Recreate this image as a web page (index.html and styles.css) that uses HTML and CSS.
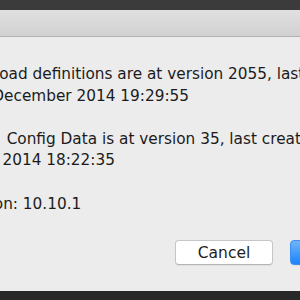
FILE: index.html
```html
<!DOCTYPE html>
<html>
<head>
<meta charset="utf-8">
<link rel="stylesheet" href="styles.css">
</head>
<body>
<div class="topbar"></div>
<div class="window">
  <div class="toolbar"></div>
  <div class="sheet">
    <div class="message">
      <p class="para">
        <span class="line">Payload definitions are at version 2055, last updated</span>
        <span class="line">31 December 2014 19:29:55</span>
      </p>
      <p class="para">
        <span class="line">Mac&ensp;Config Data is at version 35, last created on</span>
        <span class="line">Dec 2014 18:22:35</span>
      </p>
      <p class="para">
        <span class="line">Up on: 10.10.1</span>
      </p>
    </div>
    <div class="buttons">
      <button class="btn">Cancel</button>
      <button class="btn primary">OK</button>
    </div>
  </div>
</div>
<div class="bottombar"></div>
</body>
</html>
```
FILE: styles.css
```css
html, body {
  margin: 0;
  padding: 0;
  width: 300px;
  height: 300px;
  overflow: hidden;
  background: #ececec;
  font-family: "DejaVu Sans", sans-serif;
}
body {
  display: flex;
  flex-direction: column;
}
.topbar {
  height: 10px;
  flex: none;
  background: #3b3b3b;
}
.window {
  flex: 1;
  display: flex;
  flex-direction: column;
  width: 452px;
  margin-left: -52px;
}
.toolbar {
  height: 26px;
  flex: none;
  background: linear-gradient(#e1e0e1, #d2d1d2);
  border-bottom: 1px solid #b2b2b2;
}
.sheet {
  flex: 1;
  display: flex;
  flex-direction: column;
  background: #ececec;
  padding: 27px 0 26px 20px;
}
.message {
  color: #1b1b1b;
  font-size: 15.3px;
  line-height: 21.6px;
}
.para {
  margin: 0 0 21.6px 0;
}
.line {
  display: block;
  white-space: nowrap;
}
.buttons {
  margin-top: auto;
  display: flex;
  justify-content: flex-end;
  gap: 17px;
  padding-right: 12px;
}
.btn {
  width: 98px;
  height: 25px;
  border: 1px solid #c6c6c6;
  border-bottom-color: #b4b4b4;
  border-radius: 4px;
  background: #ffffff;
  font-family: "DejaVu Sans", sans-serif;
  font-size: 15.5px;
  color: #1e1e1e;
  padding: 0;
  box-shadow: 0 1px 0 rgba(0,0,0,0.05);
}
.primary {
  background: linear-gradient(#6fb4fb, #1c83fb);
  border-color: #3b8ff0;
  color: #ffffff;
}
.bottombar {
  height: 9px;
  flex: none;
  background: #282828;
}
```
